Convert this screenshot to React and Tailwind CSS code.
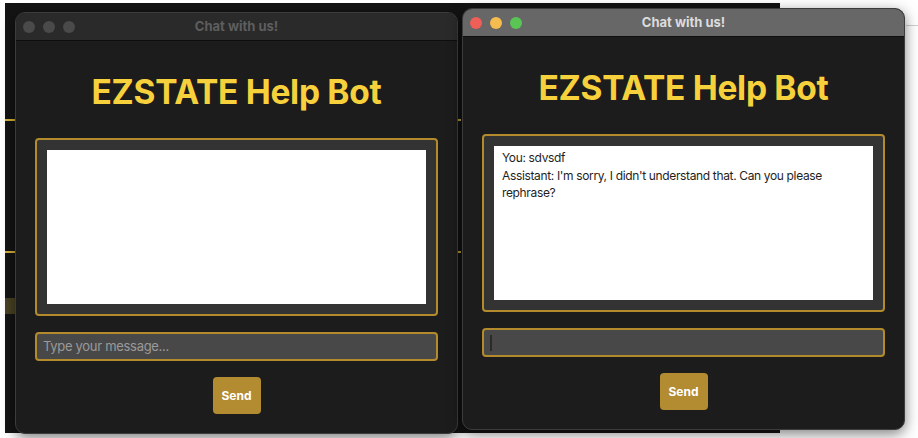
import React from 'react';

const font = { fontFamily: 'Inter, "Noto Sans", sans-serif' };

const ChatWindow = ({ active, messages, className }) => (
    <div
        className={`absolute w-[443px] h-[422px] rounded-[10px] overflow-hidden bg-[#1c1c1c] border border-[#3c3c3c] shadow-[0_4px_14px_rgba(0,0,0,0.5)] flex flex-col ${className}`}
    >
        {/* Title bar */}
        <div
            className={`relative h-[28px] shrink-0 flex items-center justify-center border-b border-[#0e0e0e] ${
                active ? 'bg-[#676767]' : 'bg-[#2a2a2a]'
            }`}
        >
            <div className="absolute left-[7px] top-0 h-full flex items-center gap-[8px]">
                <span className={`w-[12px] h-[12px] rounded-full ${active ? 'bg-[#ee5f57]' : 'bg-[#4a4a4a]'}`} />
                <span className={`w-[12px] h-[12px] rounded-full ${active ? 'bg-[#f5bd4f]' : 'bg-[#4a4a4a]'}`} />
                <span className={`w-[12px] h-[12px] rounded-full ${active ? 'bg-[#5ac454]' : 'bg-[#4a4a4a]'}`} />
            </div>
            <p className={`text-[13px] font-bold ${active ? 'text-[#dcdcdc]' : 'text-[#5e5e5e]'}`}>Chat with us!</p>
        </div>

        {/* Body */}
        <div className="flex-1 flex flex-col items-center px-[19px] pt-[32px]">
            <h1 className="h-[38px] leading-[38px] text-[33.5px] font-bold tracking-[-0.3px] text-[#f6d13c]">
                EZSTATE Help Bot
            </h1>

            <div className="mt-[27px] w-full h-[178px] rounded-[4px] border-2 border-[#b38b2c] bg-[#333333] p-[10px]">
                <div className="w-full h-full bg-white px-[8px] pt-[3px] text-[12px] leading-[17.5px] text-[#1e1e1e] tracking-[-0.35px]">
                    {messages.map((m, i) => (
                        <p key={i}>{m}</p>
                    ))}
                </div>
            </div>

            <div className="mt-[16px] w-full h-[29px] rounded-[4px] border-2 border-[#b38b2c] bg-[#484848] flex items-center px-[6px]">
                {active ? (
                    <span className="w-[2px] h-[16px] bg-[#2a2a2a]" />
                ) : (
                    <span className="text-[13px] text-[#9a9a9a] tracking-[-0.3px]">Type your message...</span>
                )}
            </div>

            <button className="mt-[16px] w-[48px] h-[37px] rounded-[4px] bg-[#b38b30] text-white text-[12px] font-bold">
                Send
            </button>
        </div>
    </div>
);

const App = () => {
    return (
        <div className="relative w-[918px] h-[438px] bg-white overflow-hidden" style={font}>
            {/* Desktop backdrop */}
            <div className="absolute left-[5px] top-[3px] w-[775px] h-[430px] bg-[#141414]" />
            <div className="absolute left-[5px] top-[119px] w-[10px] h-[2px] bg-[#d9b43a]" />
            <div className="absolute left-[5px] top-[251px] w-[10px] h-[2px] bg-[#d9b43a]" />
            <div className="absolute left-[5px] top-[298px] w-[10px] h-[16px] bg-[#4a4224]" />
            <div className="absolute left-[458px] top-[119px] w-[3px] h-[2px] bg-[#d9b43a]" />
            <div className="absolute left-[458px] top-[251px] w-[3px] h-[2px] bg-[#d9b43a]" />
            <div className="absolute left-[906px] top-[25px] w-[12px] h-[1px] bg-[#cfcfcf]" />

            <ChatWindow className="left-[15px] top-[12px]" active={false} messages={[]} />
            <ChatWindow
                className="left-[462px] top-[8px]"
                active
                messages={[
                    'You: sdvsdf',
                    "Assistant: I'm sorry, I didn't understand that. Can you please rephrase?",
                ]}
            />
        </div>
    );
};

export default App;
